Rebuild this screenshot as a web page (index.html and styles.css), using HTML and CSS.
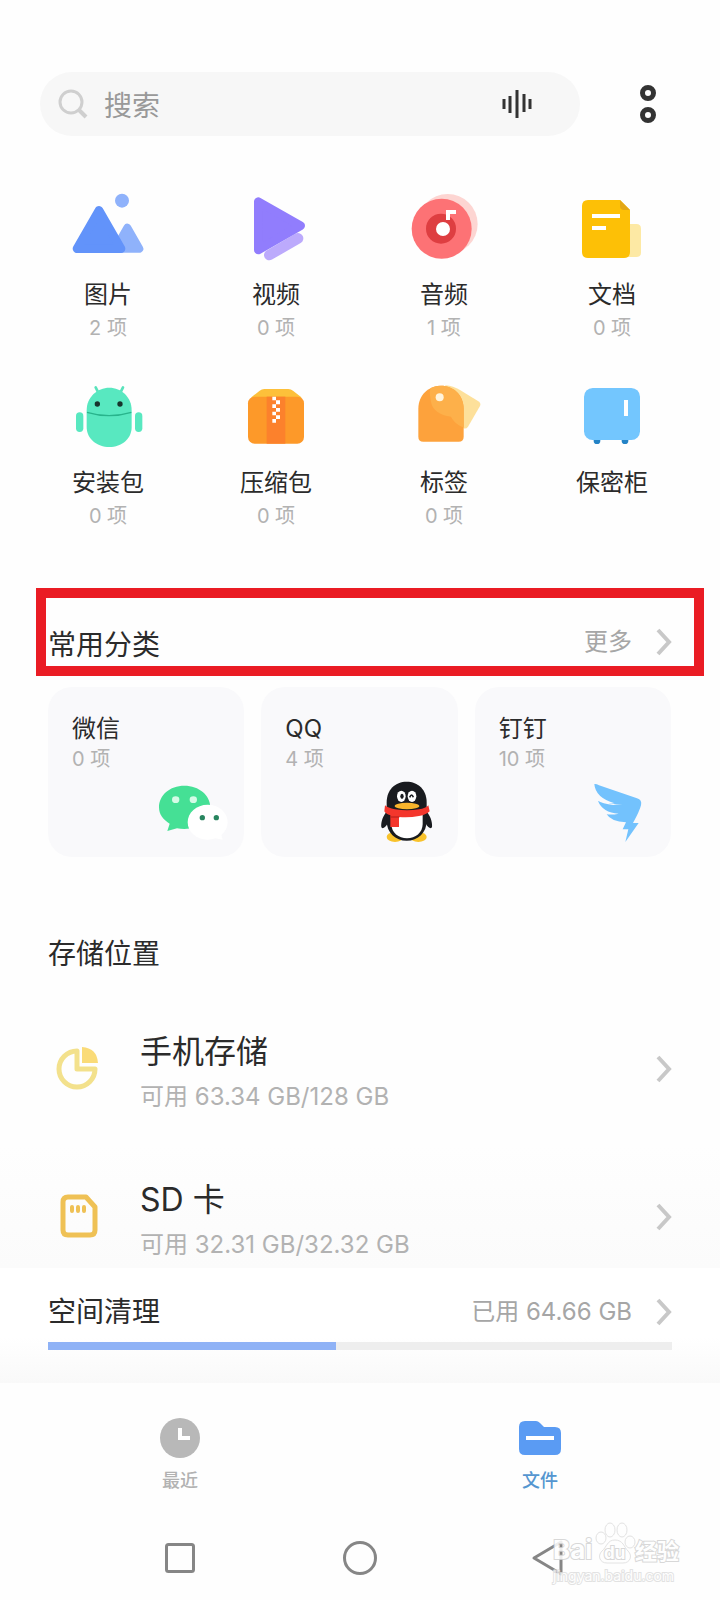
FILE: index.html
```html
<!DOCTYPE html>
<html lang="zh-CN">
<head>
    <meta charset="UTF-8">
    <meta name="viewport" content="width=device-width, initial-scale=1.0">
    <title>文件管理</title>
    <link rel="stylesheet" href="styles.css">
</head>
<body>
    <!-- 顶部搜索 -->
    <header class="top">
        <div class="search">
            <svg class="search-icon" viewBox="0 0 30 30" aria-hidden="true">
                <circle cx="13" cy="13" r="11" fill="none" stroke="#cfcfcf" stroke-width="3"/>
                <path d="M21 21l7 7" stroke="#cfcfcf" stroke-width="4"/>
            </svg>
            <input type="text" placeholder="搜索" aria-label="搜索">
            <button class="voice" aria-label="语音搜索">
                <svg viewBox="0 0 30 28">
                    <path d="M2 9v10M8 6v17M15 0v28M22 4v18M28 9v10" stroke="#333" stroke-width="3"/>
                </svg>
            </button>
        </div>
        <button class="menu" aria-label="菜单">
            <svg viewBox="0 0 16 38">
                <circle cx="8" cy="8" r="5.5" fill="none" stroke="#333" stroke-width="5"/>
                <circle cx="8" cy="30" r="5.5" fill="none" stroke="#333" stroke-width="5"/>
            </svg>
        </button>
    </header>

    <main>
        <!-- 文件类型 -->
        <div class="types">
            <a class="type" href="#images">
                <svg viewBox="96 30 216 216">
                    <circle cx="246" cy="62" r="21" fill="#8fb2fb"/>
                    <path d="M262 143l36 63h-72z" fill="#8fb2fb" stroke="#8fb2fb" stroke-width="24" stroke-linejoin="round"/>
                    <path d="M177 91l-66 115h132z" fill="#6293fa" stroke="#6293fa" stroke-width="26" stroke-linejoin="round"/>
                </svg>
                <span class="name">图片</span>
                <span class="count">2 项</span>
            </a>
            <a class="type" href="#videos">
                <svg viewBox="600 30 216 216">
                    <path d="M688 225l86-50" stroke="#bcaafc" stroke-width="32" stroke-linecap="round"/>
                    <path d="M655 65v145l127-73z" fill="#917dfd" stroke="#917dfd" stroke-width="26" stroke-linejoin="round"/>
                </svg>
                <span class="name">视频</span>
                <span class="count">0 项</span>
            </a>
            <a class="type" href="#audio">
                <svg viewBox="84 30 216 216">
                    <circle cx="203" cy="132" r="90" fill="#fdd5d2"/>
                    <circle cx="185" cy="146" r="90" fill="#fd7275"/>
                    <circle cx="183" cy="146" r="45" fill="#de3e41"/>
                    <circle cx="189" cy="147" r="21" fill="#fff"/>
                    <path d="M204 120V96h24" fill="none" stroke="#fff" stroke-width="12"/>
                </svg>
                <span class="name">音频</span>
                <span class="count">1 项</span>
            </a>
            <a class="type" href="#docs">
                <svg viewBox="588 30 216 216">
                    <path d="M740 132h29q14 0 14 14v72q0 13-14 13h-29z" fill="#fde9a4"/>
                    <path d="M624 60h96l30 30v126q0 18-18 18H624q-18 0-18-18V78q0-18 18-18z" fill="#fdc006"/>
                    <path d="M720 60l30 30h-18q-12 0-12-12z" fill="#e3a716"/>
                    <path d="M636 108h84M636 144h42" stroke="#fff" stroke-width="12"/>
                </svg>
                <span class="name">文档</span>
                <span class="count">0 项</span>
            </a>
            <a class="type" href="#apks">
                <svg viewBox="96 24 216 216">
                    <path d="M167 52l9 18M249 52l-9 18" stroke="#58e3bb" stroke-width="8" stroke-linecap="round"/>
                    <rect x="108" y="127" width="22" height="59" rx="11" fill="#58e8c0"/>
                    <rect x="285" y="127" width="22" height="59" rx="11" fill="#58e8c0"/>
                    <path d="M140 121c0-40 32-68 68-68s67 28 67 68v50c0 36-30 60-67 60s-68-24-68-60z" fill="#58e8c0"/>
                    <path d="M141 127q66 20 133 0" fill="none" stroke="#28b48c" stroke-width="4"/>
                    <circle cx="172" cy="102" r="8" fill="#17342c"/>
                    <circle cx="240" cy="102" r="8" fill="#17342c"/>
                </svg>
                <span class="name">安装包</span>
                <span class="count">0 项</span>
            </a>
            <a class="type" href="#archives">
                <svg viewBox="600 24 216 216">
                    <path d="M634 82l25-20q6-5 14-5h72q8 0 14 5l25 20v12H634z" fill="#fdc03a"/>
                    <rect x="624" y="80" width="168" height="141" rx="20" fill="#fd9929"/>
                    <path d="M680 80h56v141h-56z" fill="#fc812c"/>
                    <path d="M697 80h11v11h-11zM708 91h12v12h-12zM697 103h11v11h-11zM708 114h12v11h-12zM697 125h11v11h-11zM708 136h12v11h-12zM697 147h11v11h-11z" fill="#fff"/>
                </svg>
                <span class="name">压缩包</span>
                <span class="count">0 项</span>
            </a>
            <a class="type" href="#tags">
                <svg viewBox="84 24 216 216">
                    <path d="M196 46q24 2 44 14l55 34q9 6 5 14l-36 62q-5 8-14 5l-50-28z" fill="#fde09a"/>
                    <path d="M115 116c0-40 30-69 68-69s68 29 68 69v84q0 15-15 15H130q-15 0-15-15z" fill="#fda23c"/>
                    <path d="M152 54q14-7 31-7c38 0 68 29 68 69v56c-14-4-28-14-38-32-34-4-56-20-60-44-2-16-6-28-1-42z" fill="#fdb04a"/>
                    <circle cx="179" cy="82" r="12" fill="#fff4dc"/>
                </svg>
                <span class="name">标签</span>
                <span class="count">0 项</span>
            </a>
            <a class="type" href="#safe">
                <svg viewBox="588 24 216 216">
                    <circle cx="651" cy="212" r="10" fill="#2483c6"/>
                    <circle cx="735" cy="212" r="10" fill="#2483c6"/>
                    <rect x="612" y="54" width="168" height="156" rx="26" fill="#73c6fe"/>
                    <path d="M738 90v48" stroke="#fff" stroke-width="12"/>
                </svg>
                <span class="name">保密柜</span>
            </a>
        </div>

        <!-- 常用分类 -->
        <section class="common">
            <div class="common-head">
                <h2>常用分类</h2>
                <a class="more" href="#more">更多
                    <svg class="arrow" viewBox="0 0 16 28"><path d="M2 2l11 12L2 26" fill="none" stroke="#c8c8c8" stroke-width="4"/></svg>
                </a>
            </div>
            <div class="cards">
                <a class="card" href="#wechat">
                    <span class="name">微信</span>
                    <span class="count">0 项</span>
                    <svg viewBox="408 618 216 216">
                        <path d="M493 647c44 0 78 29 78 65s-34 65-78 65q-12 0-22-2l-29 8 7-22c-20-12-32-28-32-49 0-36 32-65 76-65z" fill="#45e095"/>
                        <ellipse cx="467" cy="689" rx="11" ry="10" fill="#d5fbe6"/>
                        <ellipse cx="520" cy="689" rx="11" ry="10" fill="#d5fbe6"/>
                        <path d="M563 704c34 0 60 23 60 53 0 15-7 28-19 38l4 14-22-4q-11 4-23 4c-34 0-60-23-60-52s26-53 60-53z" fill="#fff"/>
                        <circle cx="547" cy="743" r="8" fill="#28855f"/>
                        <circle cx="589" cy="743" r="8" fill="#28855f"/>
                    </svg>
                </a>
                <a class="card" href="#qq">
                    <span class="name">QQ</span>
                    <span class="count">4 项</span>
                    <svg viewBox="30 618 216 216">
                        <ellipse cx="105" cy="801" rx="25" ry="15" fill="#f8c22c"/>
                        <ellipse cx="175" cy="801" rx="25" ry="15" fill="#f8c22c"/>
                        <path d="M82 722c-12 14-20 32-18 50 4 6 12 0 18-10zM198 722c12 14 20 32 18 50-4 6-12 0-18-10z" fill="#191b1f"/>
                        <path d="M140 635c34 0 60 24 60 62v55c0 36-26 60-60 60s-60-24-60-60v-55c0-38 26-62 60-62z" fill="#191b1f"/>
                        <path d="M94 730h94v32c0 26-22 43-47 43s-47-17-47-43z" fill="#fff"/>
                        <ellipse cx="124" cy="679" rx="13" ry="17" fill="#fff"/>
                        <ellipse cx="156" cy="679" rx="13" ry="17" fill="#fff"/>
                        <ellipse cx="126" cy="679" rx="5" ry="8" fill="#191b1f"/>
                        <path d="M149 682q6-14 11 0" fill="none" stroke="#191b1f" stroke-width="5"/>
                        <ellipse cx="141" cy="708" rx="37" ry="10" fill="#f8b52c"/>
                        <path d="M75 706q8 8 30 12 36 6 72 0 20-3 28-12l4 18q-9 10-32 14-30 6-60 3v30H91v-35q-14-4-18-12z" fill="#f4362c"/>
                        <path d="M92 741h26" stroke="#c4231f" stroke-width="4"/>
                    </svg>
                </a>
                <a class="card" href="#dingtalk">
                    <span class="name">钉钉</span>
                    <span class="count">10 项</span>
                    <svg viewBox="672 618 216 216">
                        <path d="M706 642q6-1 14 4l114 39q16 5 12 21-4 17-24 53h17l-40 57 9-38h-17l10-21q-45-2-58-24 18 2 36-2-48-3-62-38 24 9 50 7-58-17-61-58z" fill="#73c2fd"/>
                        <path d="M722 690q30 13 68 15-40 2-68-10z" fill="#f9f9fb"/>
                    </svg>
                </a>
            </div>
        </section>

        <!-- 存储位置 -->
        <section class="storage">
            <h2>存储位置</h2>
            <a class="disk" href="#phone">
                <svg class="disk-icon" viewBox="0 0 44 44">
                    <path d="M20 4A18 18 0 1 0 38 22H20z" fill="none" stroke="#f3e18c" stroke-width="5" stroke-linejoin="round"/>
                    <path d="M25 0q15 1 16 16H25z" fill="#fadb78"/>
                </svg>
                <span class="disk-text">
                    <span class="disk-name">手机存储</span>
                    <span class="disk-size">可用 63.34 GB/128 GB</span>
                </span>
                <svg class="arrow" viewBox="0 0 16 28"><path d="M2 2l11 12L2 26" fill="none" stroke="#c8c8c8" stroke-width="4"/></svg>
            </a>
            <a class="disk" href="#sd">
                <svg class="disk-icon" viewBox="0 0 44 44">
                    <path d="M11 2h18l9 10v23q0 5-5 5H11q-5 0-5-5V7q0-5 5-5z" fill="none" stroke="#efc155" stroke-width="5" stroke-linejoin="round"/>
                    <path d="M15 12v4M21 12v4M27 12v4" stroke="#efc155" stroke-width="4" stroke-linecap="round"/>
                </svg>
                <span class="disk-text">
                    <span class="disk-name">SD 卡</span>
                    <span class="disk-size">可用 32.31 GB/32.32 GB</span>
                </span>
                <svg class="arrow" viewBox="0 0 16 28"><path d="M2 2l11 12L2 26" fill="none" stroke="#c8c8c8" stroke-width="4"/></svg>
            </a>
        </section>

        <!-- 空间清理 -->
        <section class="clean">
            <div class="clean-head">
                <h2 id="cleanTitle">空间清理</h2>
                <a class="more" href="#clean">已用 64.66 GB
                    <svg class="arrow" viewBox="0 0 16 28"><path d="M2 2l11 12L2 26" fill="none" stroke="#c8c8c8" stroke-width="4"/></svg>
                </a>
            </div>
            <progress value="288" max="624" aria-labelledby="cleanTitle"></progress>
        </section>
    </main>

    <!-- 底部标签 -->
    <nav class="tabs">
        <a href="#recent">
            <svg viewBox="0 0 42 42">
                <circle cx="21" cy="21" r="20" fill="#b8b8b8"/>
                <path d="M21 11v10h10" fill="none" stroke="#fff" stroke-width="4"/>
            </svg>
            最近
        </a>
        <a class="active" href="#files">
            <svg viewBox="0 0 42 42">
                <path d="M6 4h11q2 0 4 2l4 4h11q6 0 6 6v16q0 6-6 6H6q-6 0-6-6V10q0-6 6-6z" fill="#5a9bf3"/>
                <path d="M7 21h28" stroke="#fff" stroke-width="4"/>
            </svg>
            文件
        </a>
    </nav>

    <!-- 系统导航键 -->
    <footer class="system">
        <button aria-label="多任务">
            <svg viewBox="0 0 36 36"><rect x="4.5" y="4.5" width="27" height="27" rx="2" fill="none" stroke="#868686" stroke-width="3"/></svg>
        </button>
        <button aria-label="主页">
            <svg viewBox="0 0 36 36"><circle cx="18" cy="18" r="15.5" fill="none" stroke="#868686" stroke-width="3"/></svg>
        </button>
        <button aria-label="返回">
            <svg viewBox="0 0 36 36"><path d="M12 18L39 2v32z" fill="none" stroke="#868686" stroke-width="3" stroke-linejoin="round"/></svg>
        </button>
        <svg class="watermark" viewBox="0 0 130 64">
            <g fill="#fff" stroke="#dedede" stroke-width="1">
                <ellipse cx="49" cy="16" rx="5" ry="6"/>
                <ellipse cx="58" cy="8" rx="5" ry="7"/>
                <ellipse cx="70" cy="8" rx="5" ry="7"/>
                <ellipse cx="78" cy="20" rx="5" ry="6"/>
                <path d="M63 18c8 0 9 7 13 11 5 5 2 12-5 12H55c-7 0-10-7-5-12 5-4 5-11 13-11z"/>
            </g>
            <g fill="#fff" stroke="#d2d2d2" stroke-width="2" paint-order="stroke" font-weight="700">
                <text x="1" y="37" font-size="26">Bai</text>
                <text x="52" y="37" font-size="17">du</text>
                <text x="83" y="37" font-size="22">经验</text>
                <text x="1" y="59" font-size="14" stroke="#dedede" font-weight="400">jingyan.baidu.com</text>
            </g>
        </svg>
    </footer>
</body>
</html>
```

FILE: styles.css
```css
* {
    box-sizing: border-box;
}

body {
    margin: 0;
    min-height: 100vh;
    background: #fefefe;
    color: #2b2b2b;
    font-family: Inter, "Noto Sans CJK SC", sans-serif;
    font-size: 24px;
}

a {
    color: inherit;
    text-decoration: none;
}

button {
    padding: 0;
    border: none;
    background: none;
    cursor: pointer;
}

svg {
    display: block;
    flex: none;
    overflow: visible;
}

h2 {
    margin: 0;
    font-size: 28px;
    font-weight: 400;
    line-height: 40px;
}

/* 顶部搜索 */
.top {
    display: flex;
    align-items: center;
    gap: 36px;
    padding: 72px 40px 0;
}

.search {
    flex: 1;
    min-width: 0;
    height: 64px;
    display: flex;
    align-items: center;
    padding: 0 48px 0 18px;
    border-radius: 32px;
    background: #f7f7f7;
}

.search-icon {
    width: 30px;
    height: 30px;
}

.search input {
    flex: 1;
    min-width: 0;
    margin-left: 16px;
    padding: 4px 0 0;
    border: none;
    outline: none;
    background: none;
    font: inherit;
    font-size: 28px;
}

.search input::placeholder {
    color: #999;
    opacity: 1;
}

.voice svg {
    width: 30px;
    height: 28px;
}

.menu {
    width: 64px;
    height: 64px;
}

.menu svg {
    width: 16px;
    height: 38px;
    margin: 0 auto;
}

/* 文件类型 */
.types {
    display: grid;
    grid-template-columns: repeat(4, 1fr);
    row-gap: 35px;
    padding: 54px 24px 57px;
}

.type {
    display: flex;
    flex-direction: column;
    align-items: center;
}

.type svg {
    width: 72px;
    height: 72px;
    margin-bottom: 15px;
}

.name {
    line-height: 36px;
}

.count {
    font-size: 20px;
    line-height: 30px;
    color: #b2b2b2;
}

/* 常用分类 */
.common-head {
    display: flex;
    justify-content: space-between;
    align-items: flex-end;
    height: 88px;
    margin: 0 16px 0 36px;
    padding: 0 22px 1px 2px;
    border: 10px solid #ea1c24;
}

.more {
    display: flex;
    align-items: center;
    gap: 24px;
    line-height: 40px;
    color: #a6a6a6;
}

.common-head .more {
    padding-bottom: 3px;
}

.arrow {
    width: 16px;
    height: 28px;
}

.cards {
    display: grid;
    grid-template-columns: repeat(3, 1fr);
    gap: 17px;
    padding: 11px 49px 0 48px;
}

.card {
    display: flex;
    flex-direction: column;
    padding: 24px 16px 9px 24px;
    border-radius: 24px;
    background: #f9f9fb;
}

.card .count {
    line-height: 24px;
}

.card svg {
    width: 72px;
    height: 72px;
    margin-top: 5px;
    align-self: flex-end;
}

/* 存储位置 */
.storage {
    padding: 77px 48px 0;
    background: linear-gradient(to bottom, #fefefe 70%, #fbfbfb);
}

.disk {
    display: flex;
    align-items: center;
    height: 102px;
    margin-top: 46px;
}

.storage h2 + .disk {
    margin-top: 44px;
}

.disk-icon {
    width: 44px;
    height: 44px;
    margin: 0 39px 0 9px;
}

.disk-text {
    flex: 1;
    display: flex;
    flex-direction: column;
    padding-top: 8px;
}

.disk-name {
    font-size: 32px;
    line-height: 48px;
}

.disk-size {
    line-height: 42px;
    color: #b2b2b2;
}

/* 空间清理 */
.clean {
    padding: 24px 48px 33px;
    background: linear-gradient(to bottom, #fff 60%, #f9f9f9);
}

.clean-head {
    display: flex;
    justify-content: space-between;
}

progress {
    display: block;
    width: 100%;
    height: 8px;
    margin-top: 10px;
    border: none;
    background: #eee;
    appearance: none;
}

progress::-webkit-progress-bar {
    background: #eee;
}

progress::-webkit-progress-value {
    background: #8fb2f6;
}

progress::-moz-progress-bar {
    background: #8fb2f6;
}

/* 底部标签 */
.tabs {
    display: flex;
    padding-top: 34px;
}

.tabs a {
    flex: 1;
    display: flex;
    flex-direction: column;
    align-items: center;
    gap: 9px;
    font-size: 18px;
    font-weight: 500;
    line-height: 26px;
    color: #b2b2b2;
}

.tabs .active {
    color: #5596d0;
}

.tabs svg {
    width: 42px;
    height: 42px;
}

/* 系统导航键 */
.system {
    position: relative;
    display: flex;
    padding: 46px 90px 24px;
}

.system button {
    flex: 1;
}

.system button svg {
    width: 36px;
    height: 36px;
    margin: 0 auto;
}

.watermark {
    position: absolute;
    right: 38px;
    bottom: 14px;
    width: 130px;
    height: 64px;
    opacity: 0.85;
}
```
